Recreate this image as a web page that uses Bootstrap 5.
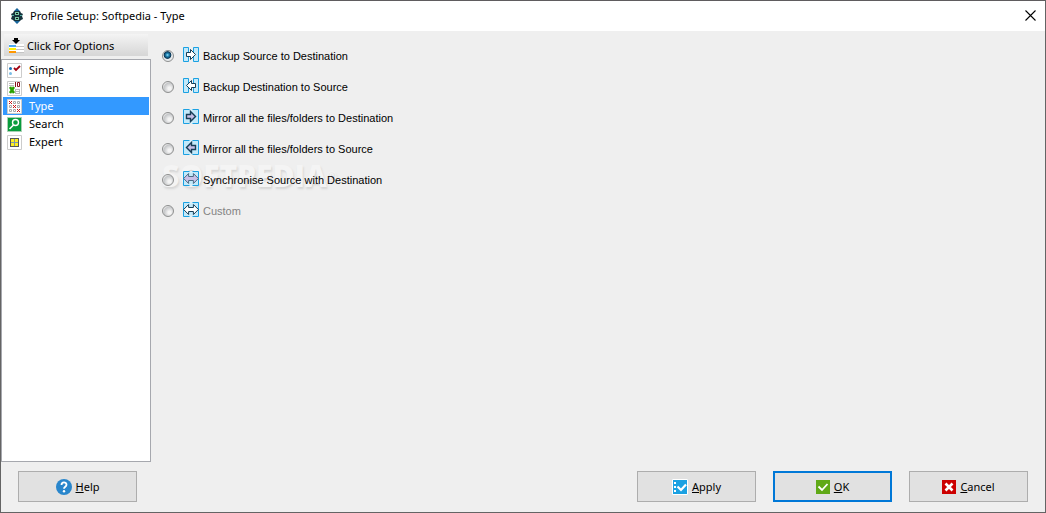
<!DOCTYPE html>
<html lang="en">
<head>
<meta charset="utf-8">
<meta name="viewport" content="width=device-width, initial-scale=1">
<title>Profile Setup</title>
<link href="https://cdn.jsdelivr.net/npm/bootstrap@5.3.0/dist/css/bootstrap.min.css" rel="stylesheet">
<style>
body { font-family: "Noto Sans", "Open Sans", sans-serif; font-size: 11px; line-height: 18px; color: #000; background: #efefef; }
svg { display: block; flex: none; }
.app-window { border: 1px solid #646464; border-top-color: #5f5c5e; }
.title-bar { background: #fff; height: 30px; padding: 0 8px 0 9px; }
.title-bar h1 { font-size: 11px; line-height: 18px; font-weight: 400; padding-left: 6px; }
.close-btn { border: 0; background: none; padding: 3px 1px 5px; }
.side-pane { width: 150px; padding-top: 3px; }
.options-btn { height: 22px; margin: 0 3px 3px; width: 144px; border: 0; padding: 1px 4px 0; gap: 3px; background: linear-gradient(#f4f4f4, #d6d6d6); color: #000; }
.page-list { background: #fff; border: 1px solid #a6a8ae; padding: 1px; }
.page-list a { height: 18px; gap: 7px; padding: 0 4px; color: #000; text-decoration: none; }
.page-list a.current { background: #3399ff; color: #fff; }
.type-pane { padding: 9px 11px; }
.type-row { position: relative; z-index: 1; height: 31px; font-family: "Liberation Sans", Arial, sans-serif; }
.type-row input { appearance: none; width: 12px; height: 12px; margin: 0 9px 0 0; border: 1px solid #8e8f8f; border-radius: 50%; background: radial-gradient(circle at 65% 65%, #f4f4f4 15%, #c4c6c8 60%, #eee 75%); }
.type-row input:checked { background: radial-gradient(circle at 45% 40%, #9be3fa 0, #2388b8 18%, #0b3554 42%, #e6e9eb 52%); }
.type-row label { gap: 4px; }
.type-row label svg { margin-bottom: 2px; }
.type-row input:disabled + label { color: #838383; }
.brand-mark { position: absolute; left: 11px; top: 125px; font: 900 30px/40px "Open Sans", sans-serif; color: #f5f5f5; text-shadow: 1px 2px 2px #d4d4d4; pointer-events: none; opacity: .9; }
.brand-mark sup { font-size: 12px; font-weight: 400; }
.foot-bar { padding: 9px 17px 10px; gap: 17px; }
.push-btn { width: 119px; height: 31px; border: 1px solid #adadad; background: #e1e1e1; color: #000; gap: 4px; padding: 0; }
.push-btn.main-btn { border: 2px solid #0078d7; }
</style>
</head>
<body>
<svg width="0" height="0" class="position-absolute" aria-hidden="true">
  <defs>
    <g id="panels"><path d="M.5 .5h5v14h-5zM10.500 .5h5v14h-5z" fill="#c3e9fa" stroke="#1ba1e2"/></g>
    <g id="wide-panels"><path d="M.5 .5h15v14H.5z" fill="#c3e9fa" stroke="#1ba1e2"/><path d="M6.500 0h3v2h-3zM6.500 13h3v2h-3z" fill="#d9eff9"/></g>
    <path id="right-arrow" d="M3.500 5.500h4v-3l5 5-5 5v-3h-4z"/>
    <path id="left-arrow" d="M12.500 5.500h-4v-3l-5 5 5 5v-3h4z"/>
    <path id="both-arrow" d="M.6 7.500l5-5v3h4.800v-3l5 5-5 5v-3H5.600v3z"/>
  </defs>
</svg>
<div class="app-window min-vh-100 d-flex flex-column">
  <header class="title-bar d-flex align-items-center">
    <svg width="14" height="16" viewBox="0 0 14 16"><path d="M7 0l3 3H4zM7 16l3-3H4z" fill="#17649a"/><path d="M4 3h6l1 2 2 1-1 2 1 3-2 1-1 1H4l-1-1-2-1 1-3-1-2 2-1z" fill="#16333c"/><path d="M5 4h4v3H5zM5 9h4v3H5z" fill="#79c9a6"/><path d="M6 5h2v1H6zM6 10h2v1H6z" fill="#111"/><path d="M2 7h2v1H2zM10 7h2v1h-2z" fill="#4eaaa0"/></svg>
    <h1 class="mb-0 flex-grow-1">Profile Setup: Softpedia - Type</h1>
    <button class="close-btn" type="button" aria-label="Close"><svg width="11" height="11" viewBox="0 0 11 11"><path d="M.5 .5l10 10M10.500 .5l-10 10" stroke="#000" stroke-width="1.100"/></svg></button>
  </header>
  <div class="d-flex flex-grow-1">
    <aside class="side-pane d-flex flex-column flex-shrink-0">
      <button type="button" class="options-btn d-flex align-items-center">
        <svg width="16" height="16" viewBox="0 0 16 16"><path d="M1 6h15v9H1z" fill="#fff"/><path d="M1 7h7v2H1z" fill="#4aa8f0"/><path d="M1 10h7v2H1z" fill="#fff000"/><path d="M1 13h7v2H1z" fill="#ff9800"/><path d="M8 8.500h8M8 11.500h8M8 14.500h8" stroke="#c4c4c4"/><path d="M6 0h4v2h2L8 6 4 2h2z"/></svg>
        <span>Click For Options</span>
      </button>
      <nav class="page-list flex-grow-1">
        <a href="#" class="d-flex align-items-center"><svg width="15" height="15" viewBox="0 0 15 15"><path d="M.5 .5h14v14H.5z" fill="#fff" stroke="#ccc"/><circle cx="3.500" cy="5.500" r="1.500" fill="#1670b8"/><circle cx="3.500" cy="10.500" r="1.500" fill="#79bce6"/><path d="M7 5l2 2 4-4" fill="none" stroke="#a00010" stroke-width="1.800"/></svg>Simple</a>
        <a href="#" class="d-flex align-items-center"><svg width="15" height="15" viewBox="0 0 15 15"><path d="M.5 .5h14v14H.5z" fill="#fff" stroke="#ccc"/><path d="M2 2.500h5M2 4.500h5M8 8.500h5M8 10.500h5M8 12.500h5M8.500 8v5M12.500 8v5" stroke="#bbb"/><path d="M8.500 1v5M10.500 1.500h2v4h-2z" fill="none" stroke="#8c1020"/><path d="M3 6l4 6M7 6l-4 6" stroke="#2aa000" stroke-width="2.500"/></svg>When</a>
        <a href="#" class="current d-flex align-items-center" aria-current="page"><svg width="15" height="15" viewBox="0 0 15 15"><path d="M.5 .5h14v14H.5z" fill="#fff" stroke="#ccc"/><path d="M6.500 2.500h2v2h-2zM10.500 2.500h2v2h-2zM2.500 6.500h2v2h-2zM10.500 6.500h2v2h-2zM2.500 10.500h2v2h-2zM6.500 10.500h2v2h-2z" fill="none" stroke="#aaa"/><path d="M2 2l3 3M5 2l-3 3M6 6l3 3M9 6l-3 3M10 10l3 3M13 10l-3 3" stroke="#cc1515"/></svg>Type</a>
        <a href="#" class="d-flex align-items-center"><svg width="15" height="15" viewBox="0 0 15 15"><path d="M.5 .5h14v14H.5z" fill="#089c3c" stroke="#a8cfb3"/><circle cx="8.500" cy="5.500" r="3" fill="none" stroke="#fff" stroke-width="1.400"/><path d="M6.500 8l-4 4" stroke="#fff" stroke-width="1.600"/></svg>Search</a>
        <a href="#" class="d-flex align-items-center"><svg width="15" height="15" viewBox="0 0 15 15"><path d="M.5 .5h14v14H.5z" fill="#fff" stroke="#ccc"/><path d="M3 3h9v9H3z" fill="#555"/><path d="M4 4h3v3H4zM8 4h3v3H8zM4 8h3v3H4zM8 8h3v3H8z" fill="#ffee20"/><path d="M7 4h1v3h3v1H8v3H7V8H4V7h3z" fill="#7d98a8"/></svg>Expert</a>
      </nav>
    </aside>
    <main class="type-pane flex-grow-1 position-relative">
      <div class="type-row d-flex align-items-center"><input type="radio" name="type" id="t1" checked><label for="t1" class="d-flex align-items-center"><svg width="16" height="15" viewBox="0 0 16 15"><use href="#panels"/><use href="#right-arrow" fill="#fff" stroke="#173d55"/></svg>Backup Source to Destination</label></div>
      <div class="type-row d-flex align-items-center"><input type="radio" name="type" id="t2"><label for="t2" class="d-flex align-items-center"><svg width="16" height="15" viewBox="0 0 16 15"><use href="#panels"/><use href="#left-arrow" fill="#fff" stroke="#173d55"/></svg>Backup Destination to Source</label></div>
      <div class="type-row d-flex align-items-center"><input type="radio" name="type" id="t3"><label for="t3" class="d-flex align-items-center"><svg width="16" height="15" viewBox="0 0 16 15"><use href="#wide-panels"/><use href="#right-arrow" fill="#c8bfe7" stroke="#173d55" stroke-width="1.400"/></svg>Mirror all the files/folders to Destination</label></div>
      <div class="type-row d-flex align-items-center"><input type="radio" name="type" id="t4"><label for="t4" class="d-flex align-items-center"><svg width="16" height="15" viewBox="0 0 16 15"><use href="#wide-panels"/><use href="#left-arrow" fill="#c8bfe7" stroke="#173d55" stroke-width="1.400"/></svg>Mirror all the files/folders to Source</label></div>
      <div class="type-row d-flex align-items-center"><input type="radio" name="type" id="t5"><label for="t5" class="d-flex align-items-center"><svg width="16" height="15" viewBox="0 0 16 15"><use href="#wide-panels"/><use href="#both-arrow" fill="#c8bfe7" stroke="#4d6c84"/></svg>Synchronise Source with Destination</label></div>
      <div class="type-row d-flex align-items-center"><input type="radio" name="type" id="t6" disabled><label for="t6" class="d-flex align-items-center"><svg width="16" height="15" viewBox="0 0 16 15"><use href="#wide-panels"/><use href="#both-arrow" fill="#fff" stroke="#173d55"/></svg>Custom</label></div>
      <div class="brand-mark" aria-hidden="true">SOFTPEDIA<sup>®</sup></div>
    </main>
  </div>
  <footer class="foot-bar d-flex">
    <button type="button" class="push-btn d-flex align-items-center justify-content-center me-auto"><svg width="16" height="16" viewBox="0 0 16 16"><circle cx="8" cy="8" r="8" fill="#2986cc"/><path d="M5.500 6c0-3.500 5-3.300 5-.3 0 2-2.500 2-2.500 4" fill="none" stroke="#fff" stroke-width="1.800"/><circle cx="8" cy="12.200" r="1.200" fill="#fff"/></svg><span><u>H</u>elp</span></button>
    <button type="button" class="push-btn d-flex align-items-center justify-content-center"><svg width="16" height="16" viewBox="0 0 16 16"><path d="M.5 .5h15v15H.5z" fill="#1ba1e2" stroke="#fff"/><path d="M2 3h2v2H2zM2 7h2v2H2zM2 11h2v2H2z" fill="#fff"/><path d="M5.500 7.500l3.500 3.500 5-5.500" fill="none" stroke="#fff" stroke-width="2.200"/></svg><span><u>A</u>pply</span></button>
    <button type="button" class="push-btn main-btn d-flex align-items-center justify-content-center"><svg width="14" height="14" viewBox="0 0 14 14"><path d="M0 0h14v14H0z" fill="#60a917"/><path d="M2.500 6.500l3.500 3.500 5.500-6" fill="none" stroke="#fff" stroke-width="1.800"/></svg><span><u>O</u>K</span></button>
    <button type="button" class="push-btn d-flex align-items-center justify-content-center"><svg width="14" height="14" viewBox="0 0 14 14"><path d="M0 0h14v14H0z" fill="#cc0000"/><path d="M3.500 3.500l7 7M10.500 3.500l-7 7" stroke="#fff" stroke-width="2.600"/></svg><span><u>C</u>ancel</span></button>
  </footer>
</div>
<script src="https://cdn.jsdelivr.net/npm/bootstrap@5.3.0/dist/js/bootstrap.bundle.min.js"></script>
</body>
</html>
